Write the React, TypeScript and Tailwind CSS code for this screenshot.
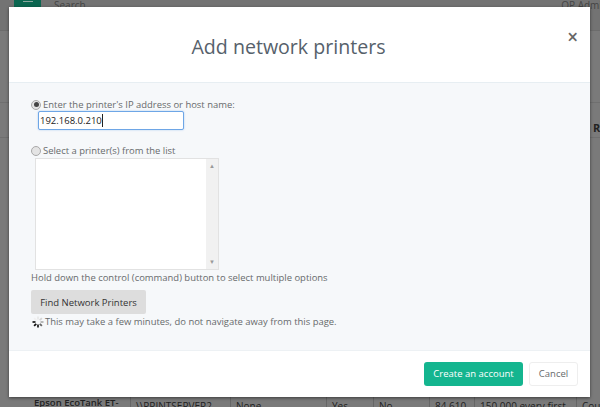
import React from "react";

const font = "font-['Open_Sans',sans-serif]";

const bottomRow = [
  { text: "\\\\PRINTSERVER2", w: "w-[100px]" },
  { text: "None", w: "w-[96px]" },
  { text: "Yes", w: "w-[47px]" },
  { text: "No", w: "w-[56px]" },
  { text: "84,610", w: "w-[45px]" },
  { text: "150,000 every first", w: "w-[102px]" },
  { text: "Cou", w: "w-[24px]" },
];

function Spinner() {
  const shades = ["#e8e8e8", "#d4d4d4", "#b0b0b0", "#666", "#222", "#111", "#222", "#f0f0f0"];
  return (
    <svg width="12" height="12" viewBox="0 0 12 12" className="shrink-0">
      {shades.map((shade, i) => (
        <line key={i} x1="6" y1="0.5" x2="6" y2="3.5" stroke={shade} strokeWidth="1.8" transform={`rotate(${i * 45} 6 6)`} />
      ))}
    </svg>
  );
}

function Radio({ checked }: { checked?: boolean }) {
  return (
    <span className="flex h-[10px] w-[10px] shrink-0 items-center justify-center rounded-full border border-[#a9a9a9] bg-[#e4e4e4]">
      {checked && <span className="h-[5px] w-[5px] rounded-full bg-[#444]" />}
    </span>
  );
}

function Backdrop() {
  return (
    <div className="absolute inset-0 flex flex-col overflow-hidden bg-[#7a7a7a] text-[10px] text-[#333]">
      <div className="flex h-[31px] shrink-0 items-start border-b border-[#6c6c6c] bg-[#737373]">
        <div className="ml-[14px] flex h-[8px] w-[27px] justify-center bg-[#0b6650] pt-[1px]">
          <span className="h-[1px] w-[10px] bg-[#8aa69e]" />
        </div>
        <span className="ml-[13px] leading-[11px] text-[#444]">Search</span>
        <span className="ml-auto mr-[-8px] shrink-0 leading-[11px] whitespace-nowrap text-[#444]">OP Admin</span>
      </div>
      <div className="mt-[71px] flex h-[36px] shrink-0 justify-end border-y border-[#6f6f6f] pt-[18px]">
        <span className="mr-[-2px] w-[9px] text-[11px] leading-[14px] font-bold text-[#222]">R</span>
      </div>
      <div className="mt-auto ml-[30px] flex h-[10px] shrink-0 items-start text-[#222]">
        <span className="w-[100px] shrink-0 pl-[4px] pt-[1px] text-[9.5px] leading-[10px] font-semibold whitespace-nowrap">Epson EcoTank ET-</span>
        {bottomRow.map((cell) => (
          <span key={cell.text} className={`${cell.w} shrink-0 border-l border-[#666] pl-[5px] pt-[4px] leading-[10px] whitespace-nowrap`}>
            {cell.text}
          </span>
        ))}
      </div>
    </div>
  );
}

export default function App() {
  return (
    <div className={`relative h-[407px] w-[600px] overflow-hidden ${font}`}>
      <Backdrop />
      <div className="absolute left-[9px] top-[7px] flex h-[390px] w-[581px] flex-col bg-white shadow-[0_1px_3px_rgba(0,0,0,0.5)]">
        <div className="relative flex h-[76px] shrink-0 items-center justify-center border-b border-[#e7eef2] pr-[22px] pt-[5px]">
          <h1 className="text-[19.6px] font-medium text-[#56616b]">Add network printers</h1>
          <span className="absolute right-[12px] top-[21px] text-[19px] leading-[19px] font-semibold text-[#666]">×</span>
        </div>
        <div className="flex flex-1 flex-col bg-[#f6f8fa] pl-[22px] pt-[15px] text-[9.45px] leading-[13px] text-[#676a6c]">
          <div className="flex items-center gap-[2px]">
            <Radio checked />
            <span>Enter the printer's IP address or host name:</span>
          </div>
          <div className="ml-[7px] flex h-[19px] w-[146px] items-center rounded-[2px] border border-[#6ea6e6] bg-white pl-[1px] text-[9.5px] text-[#222] shadow-[0_0_2px_#a9c9f0]">
            <span>192.168.0.210</span>
            <span className="h-[13px] w-[1px] bg-[#222]" />
          </div>
          <div className="mt-[14px] flex items-center gap-[2px]">
            <Radio />
            <span>Select a printer(s) from the list</span>
          </div>
          <div className="ml-[4px] mt-[1px] flex h-[112px] w-[184px] border border-[#e2e2e2] bg-white">
            <div className="flex-1" />
            <div className="flex w-[12px] flex-col items-center justify-between bg-[#f1f1f1] py-[4px] text-[6px] leading-none text-[#999]">
              <span>▲</span>
              <span>▼</span>
            </div>
          </div>
          <p className="mt-[1px]">Hold down the control (command) button to select multiple options</p>
          <button className="mt-[6px] h-[24px] w-[115px] rounded-[2px] bg-[#dddddd] text-[9.5px] font-medium text-[#333]">
            Find Network Printers
          </button>
          <div className="ml-[1px] mt-[1px] flex items-center gap-[1px]">
            <Spinner />
            <span>This may take a few minutes, do not navigate away from this page.</span>
          </div>
        </div>
        <div className="flex h-[47px] shrink-0 items-center justify-end gap-[6px] border-t border-[#edf1f4] pr-[12px]">
          <button className="h-[24px] w-[99px] rounded-[3px] bg-[#14b58f] text-[9.5px] text-white">Create an account</button>
          <button className="h-[24px] w-[49px] rounded-[3px] border border-[#eeeeee] bg-white text-[9.5px] text-[#676a6c]">Cancel</button>
        </div>
      </div>
    </div>
  );
}
